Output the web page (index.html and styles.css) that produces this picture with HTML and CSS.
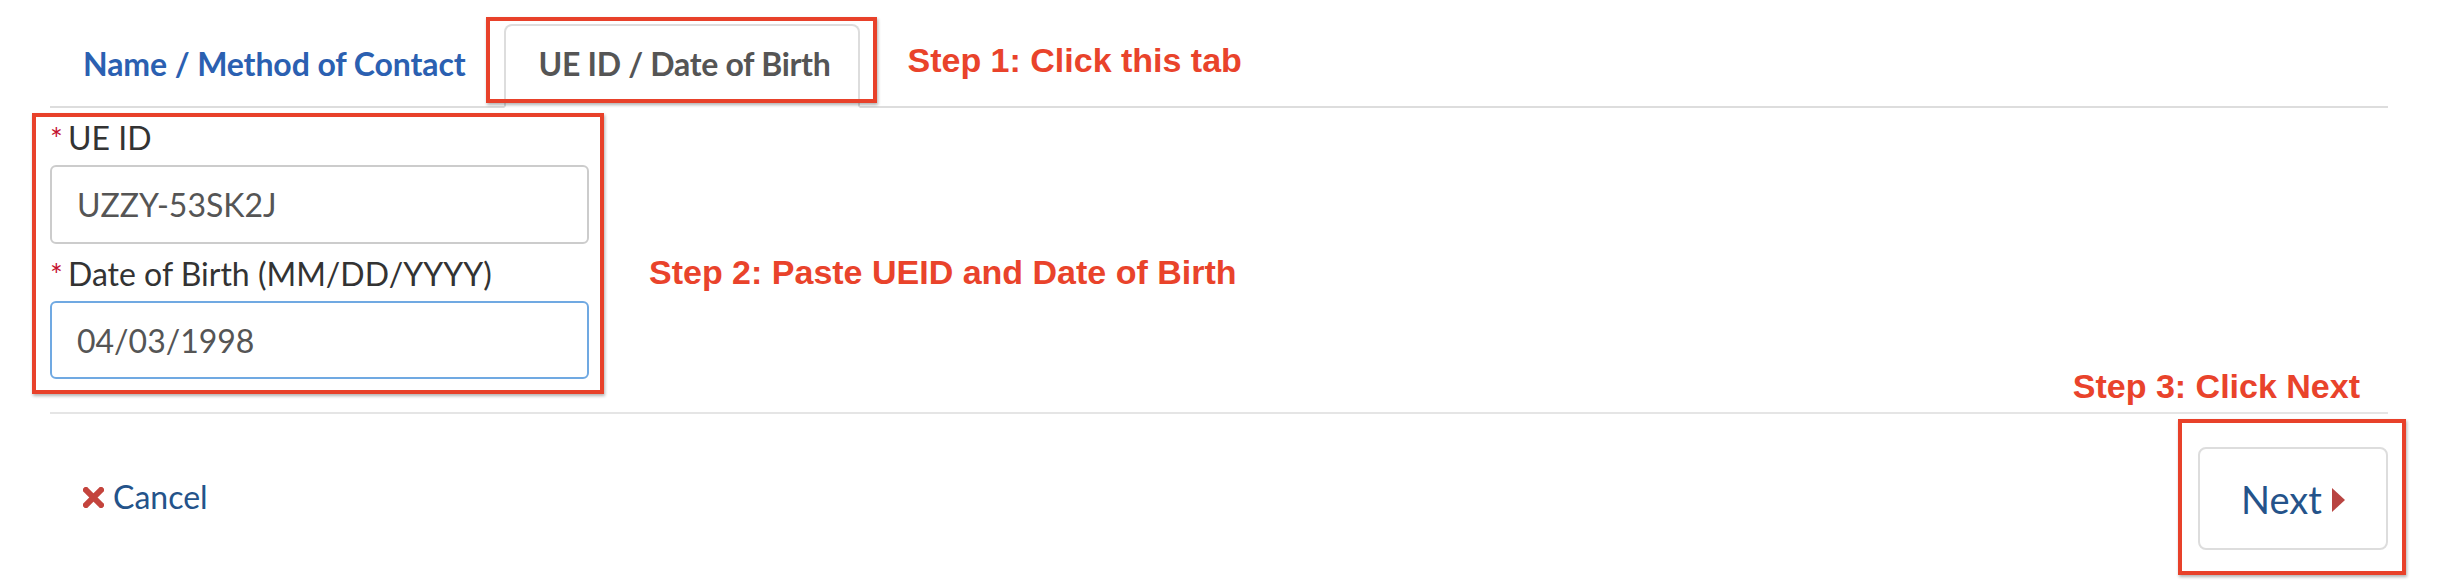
FILE: index.html
```html
<!DOCTYPE html>
<html lang="en">

<head>
    <meta charset="UTF-8">
    <meta name="viewport" content="width=device-width, initial-scale=1.0">
    <title>Find Record</title>
    <link rel="stylesheet" href="styles.css">
</head>

<body>
    <div class="modal">
        <!-- tabs -->
        <div class="nav-row">
            <ul class="nav-tabs">
                <li class="tab"><a href="#">Name / Method of Contact</a></li>
                <li class="tab active marked"><a href="#">UE ID / Date of Birth</a></li>
            </ul>
            <div class="step step-one">Step 1: Click this tab</div>
        </div>

        <!-- form -->
        <div class="modal-body">
            <form class="lookup-form marked">
                <div class="form-group">
                    <label for="ueid"><span class="req">*</span>UE ID</label>
                    <input id="ueid" class="form-control" type="text" value="UZZY-53SK2J">
                </div>
                <div class="form-group">
                    <label for="dob"><span class="req">*</span>Date of Birth (MM/DD/YYYY)</label>
                    <input id="dob" class="form-control is-focused" type="text" value="04/03/1998">
                </div>
            </form>
            <div class="step step-two">Step 2: Paste UEID and Date of Birth</div>
            <div class="step step-three">Step 3: Click Next</div>
        </div>

        <!-- footer -->
        <div class="modal-footer">
            <a class="btn-cancel" href="#">
                <svg class="icon-x" width="21" height="21" viewBox="0 0 21 21">
                    <path d="M3 3 L18 18 M18 3 L3 18" stroke="#c4443d" stroke-width="6" stroke-linecap="square" />
                </svg>
                Cancel
            </a>
            <button class="btn-next marked" type="button">Next<span class="caret-right"></span></button>
        </div>
    </div>
</body>

</html>
```

FILE: styles.css
```css
body {
    margin: 0;
    background: #fff;
    font-family: Lato, "Open Sans", sans-serif;
}

.modal {
    padding: 24px 56px 0 50px;
}

/* 紅框標示 */
.marked {
    position: relative;
}

.marked::after {
    content: "";
    position: absolute;
    border: 4px solid #e8412a;
    box-shadow: 1px 2px 3px rgba(0, 0, 0, 0.3);
    pointer-events: none;
}

.step {
    font-family: "Liberation Sans", Arial, sans-serif;
    font-weight: 700;
    font-size: 34px;
    line-height: 34px;
    color: #e9432b;
    white-space: nowrap;
}

/* 分頁 */
.nav-row {
    display: flex;
    border-bottom: 2px solid #ddd;
}

.nav-tabs {
    display: flex;
    margin: 0 0 -2px;
    padding: 0;
    list-style: none;
}

.tab {
    margin-right: 4px;
    border: 2px solid transparent;
    border-radius: 8px 8px 0 0;
}

.tab a {
    display: block;
    padding: 18px 32px 22px 31px;
    font-size: 32px;
    font-weight: 700;
    line-height: 40px;
    letter-spacing: -0.1px;
    color: #2b60b1;
    text-decoration: none;
}

.tab.active {
    border-color: #ddd #ddd transparent;
    background: #fff;
}

.tab.active a {
    padding: 18px 28px 22px 33px;
    letter-spacing: -0.3px;
    color: #555;
}

.tab.active::after {
    top: -9px;
    right: -19px;
    bottom: 3px;
    left: -20px;
}

.step-one {
    margin: 19px 0 0 43px;
}

/* 表單 */
.modal-body {
    display: flex;
}

.lookup-form {
    width: 539px;
    margin: 0;
    padding: 10px 0 33px;
}

.lookup-form::after {
    top: 5px;
    right: -15px;
    bottom: 18px;
    left: -18px;
}

.form-group + .form-group {
    margin-top: 10px;
}

label {
    display: block;
    margin-bottom: 7px;
    font-size: 32px;
    line-height: 40px;
    color: #333;
}

.req {
    display: inline-block;
    width: 18px;
    font-size: 30px;
    vertical-align: top;
    color: #c4122f;
}

.form-control {
    display: block;
    box-sizing: border-box;
    width: 100%;
    height: 79px;
    padding: 0 25px;
    border: 2px solid #ccc;
    border-radius: 6px;
    font-family: Lato, sans-serif;
    font-size: 32px;
    color: #555;
    background: #fff;
    outline: none;
}

.form-control.is-focused {
    height: 78px;
    border-color: #70a9e2;
}

.step-two {
    margin: 147px 0 0 60px;
}

.step-three {
    align-self: flex-end;
    margin: 0 28px 9px auto;
}

/* 底部按鈕 */
.modal-footer {
    display: flex;
    justify-content: space-between;
    align-items: center;
    padding: 33px 0 37px 33px;
    border-top: 2px solid #e5e5e5;
}

.btn-cancel {
    display: flex;
    align-items: center;
    gap: 9px;
    padding-bottom: 4px;
    font-size: 32px;
    color: #24538a;
    text-decoration: none;
}

.icon-x {
    margin-top: 2px;
}

.btn-next {
    display: flex;
    justify-content: center;
    align-items: center;
    gap: 10px;
    width: 190px;
    height: 103px;
    border: 2px solid #ddd;
    border-radius: 8px;
    background: #fff;
    font-family: Lato, sans-serif;
    font-size: 38px;
    color: #24538a;
    cursor: pointer;
}

.btn-next::after {
    top: -30px;
    right: -20px;
    bottom: -27px;
    left: -22px;
}

.caret-right {
    width: 0;
    height: 0;
    margin-top: 2px;
    border-top: 12px solid transparent;
    border-bottom: 12px solid transparent;
    border-left: 13px solid #b94441;
}
```
